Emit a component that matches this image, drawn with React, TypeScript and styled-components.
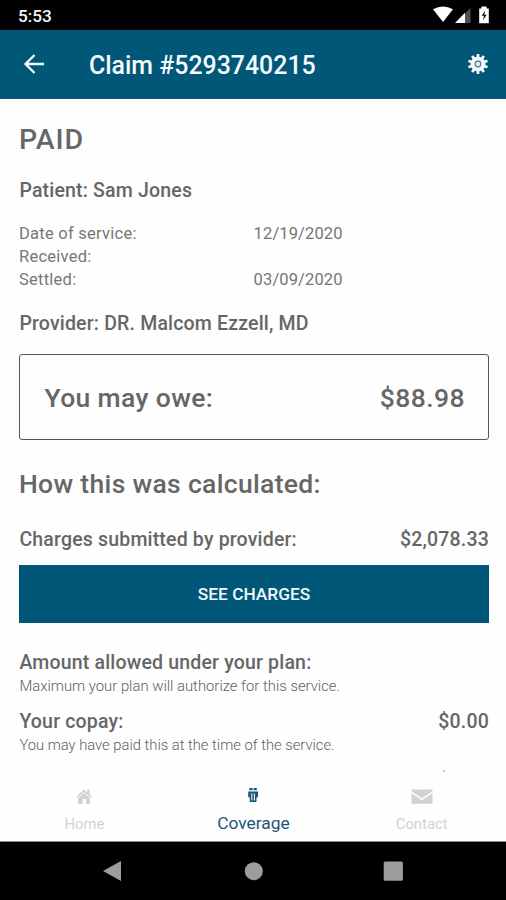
import React from "react";
import styled, { createGlobalStyle } from "styled-components";

const TEAL = "#005778";

const GlobalStyle = createGlobalStyle`
  html, body { margin: 0; padding: 0; background: #fff; }
  *, *::before, *::after { box-sizing: border-box; }
`;

const Screen = styled.div`
  width: 506px;
  height: 900px;
  display: flex;
  flex-direction: column;
  overflow: hidden;
  background: #fefefe;
  color: #666;
  font-family: Roboto, "Liberation Sans", sans-serif;
  white-space: nowrap;
`;

const StatusBar = styled.div`
  height: 30px;
  flex: none;
  display: flex;
  justify-content: space-between;
  padding: 1px 14px 0 18px;
  background: #000;
  color: #f4f4f4;
  font-size: 17.2px;
  font-weight: 500;
  line-height: 31px;
`;

const StatusIcons = styled.svg`
  width: 60px;
  height: 20px;
  margin-top: 4px;
`;

const AppBar = styled.header`
  height: 69px;
  flex: none;
  display: flex;
  align-items: center;
  padding: 0 17.5px 0 23px;
  background: ${TEAL};
  border-bottom: 1px solid #174f6c;
  color: #f7fbfd;
`;

const BackIcon = styled.svg`
  width: 22px;
  height: 22px;
`;

const Title = styled.h1`
  flex: 1;
  margin: 4px 0 0 44px;
  font-size: 24.9px;
  font-weight: 500;
  line-height: 30px;
`;

const GearIcon = styled.svg`
  width: 22px;
  height: 22px;
`;

const Content = styled.main`
  flex: 1;
  display: flex;
  flex-direction: column;
  padding: 24px 17px 0 19px;
`;

const Heading = styled.h2<{ $size: number; $spacing: number }>`
  margin: 0;
  font-size: ${(p) => p.$size}px;
  font-weight: 500;
  line-height: 34px;
  letter-spacing: ${(p) => p.$spacing}px;
`;

const Label = styled.div<{ $top?: number }>`
  display: flex;
  justify-content: space-between;
  margin-top: ${(p) => p.$top ?? 0}px;
  padding-left: 0.4px;
  font-size: 19.5px;
  font-weight: 500;
  line-height: 24px;
  letter-spacing: 0.18px;
`;

const Dates = styled.dl`
  display: grid;
  grid-template-columns: 234.6px auto;
  grid-auto-rows: 23px;
  margin: 19px 0 0;
  font-size: 16.5px;
  line-height: 23px;
  letter-spacing: 0.25px;
  color: #767676;

  dt, dd { margin: 0; }
  dd { letter-spacing: 0.12px; }
`;

const OweBox = styled.section`
  height: 86px;
  display: flex;
  align-items: center;
  justify-content: space-between;
  margin: 18px 0 27px;
  padding: 1px 23px 0 24.5px;
  border: 1.5px solid #555;
  border-radius: 3px;
`;

const ChargesButton = styled.button`
  height: 58px;
  margin: 13px 0 28px;
  padding: 0 0 1px;
  border: 0;
  background: ${TEAL};
  color: #f2f9fc;
  font: 500 17.3px Roboto, sans-serif;
`;

const Note = styled.p<{ $size: number }>`
  margin: 2px 0 0;
  padding-left: 0.4px;
  font-size: ${(p) => p.$size}px;
  font-weight: 300;
  line-height: 18px;
  color: #606060;
`;

const Speck = styled.span`
  width: 2px;
  height: 2px;
  margin: 16px 0 0 424px;
  border-radius: 1px;
  background: #b5b5b5;
`;

const TabBar = styled.nav`
  height: 62px;
  flex: none;
  display: grid;
  grid-template-columns: repeat(3, 1fr);
  border-bottom: 1px solid #888;
`;

const Tab = styled.a<{ $active?: boolean }>`
  display: flex;
  flex-direction: column;
  align-items: center;
  color: ${(p) => (p.$active ? "#1d5677" : "#d2d2d2")};
  font-size: ${(p) => (p.$active ? 17.4 : 14.8)}px;
  line-height: 24px;

  svg { width: 24px; height: 24px; margin: 4px 0; }
`;

const TabText = styled.span<{ $up?: boolean }>`
  margin-top: ${(p) => (p.$up ? -1 : 0)}px;
  padding-left: ${(p) => (p.$up ? 1 : 0)}px;
`;

const SystemNav = styled.div`
  height: 58px;
  flex: none;
  display: flex;
  background: #000;
`;

const NavGlyphs = styled.svg`
  width: 506px;
  height: 58px;
  fill: #9d9d9d;
`;

const gearTeeth = Array.from({ length: 10 }, (_, i) => i * 36);

export default function App() {
  return (
    <>
      <GlobalStyle />
      <Screen>
        <StatusBar>
          <span>5:53</span>
          <StatusIcons viewBox="432 5 60 20">
            <path d="M433 9.2Q443 3.8 453 9.2L443 22Z" fill="#fff" />
            <path d="M456 23L470.5 8V23Z" fill="#505050" />
            <path d="M455 23L465 12.8V23Z" fill="#fff" />
            <path d="M479.2 8.6h2.2V6.5h5.2v2.1h2.2V23.2h-9.6Z" fill="#fff" />
            <path d="M485.2 10.8l-3.6 5h2.3l-.8 4.4 3.6-5.4h-2.4z" fill="#111" />
          </StatusIcons>
        </StatusBar>
        <AppBar>
          <BackIcon viewBox="0 0 22 22" fill="none" stroke="currentColor" strokeWidth="2.3">
            <path d="M21 11H2.5M11.5 2L2.5 11l9 9" />
          </BackIcon>
          <Title>Claim #5293740215</Title>
          <GearIcon viewBox="0 0 22 22" fill="currentColor">
            {gearTeeth.map((angle) => (
              <path key={angle} d="M9.3 5L9.8 1h2.4l.5 4Z" transform={`rotate(${angle} 11 11)`} />
            ))}
            <circle cx="11" cy="11" r="7.3" />
            <circle cx="11" cy="11" r="2.9" fill="#dfe9ee" stroke="#467990" strokeWidth="1.1" />
          </GearIcon>
        </AppBar>

        <Content>
          <Heading $size={28.5} $spacing={0.8}>PAID</Heading>
          <Label $top={22}>Patient: Sam Jones</Label>
          <Dates>
            <dt>Date of service:</dt>
            <dd>12/19/2020</dd>
            <dt>Received:</dt>
            <dd />
            <dt>Settled:</dt>
            <dd>03/09/2020</dd>
          </Dates>
          <Label $top={21}>Provider: DR. Malcom Ezzell, MD</Label>

          <OweBox>
            <Heading $size={26.5} $spacing={0.35}>You may owe:</Heading>
            <Heading $size={26.5} $spacing={0.45}>$88.98</Heading>
          </OweBox>

          <Heading $size={26.5} $spacing={0.32}>How this was calculated:</Heading>
          <Label $top={27}>
            <span>Charges submitted by provider:</span>
            <span>$2,078.33</span>
          </Label>
          <ChargesButton>SEE CHARGES</ChargesButton>

          <Label>Amount allowed under your plan:</Label>
          <Note $size={14.85}>Maximum your plan will authorize for this service.</Note>
          <Label $top={15}>
            <span>Your copay:</span>
            <span>$0.00</span>
          </Label>
          <Note $size={14.75}>You may have paid this at the time of the service.</Note>
          <Speck />
        </Content>

        <TabBar>
          <Tab>
            <svg viewBox="0 0 24 24" fill="currentColor">
              <path d="M4.4 12.6L12 5.6l3.2 2.9V5.6h2.4v5l2.4 2-1 1.2L12 8l-6.6 5.8Z" />
              <path d="M6 14.2l6-5.4 6 5.4V20h-4v-5h-3.4v5H6Z" />
            </svg>
            <TabText>Home</TabText>
          </Tab>
          <Tab $active>
            <svg viewBox="0 0 24 24" fill="currentColor">
              <path d="M8.4 4h3.2v2.2H8.4zM12.6 4h3.2v2.2h-3.2z" />
              <path d="M7.2 7.4h9.8v5.8h-1.5V18H8.7v-4.8H7.2Z" />
              <path d="M10.3 9.4h1.1v7h-1.1zM12.9 9.4h1.1v7h-1.1z" fill="#eef4f7" />
            </svg>
            <TabText $up>Coverage</TabText>
          </Tab>
          <Tab>
            <svg viewBox="0 0 24 24" fill="currentColor">
              <path d="M1.5 5.5h21v1.8L12 14.2 1.5 7.3Z" />
              <path d="M1.5 9.2L12 16.2l10.5-7V19.8h-21Z" />
            </svg>
            <TabText>Contact</TabText>
          </Tab>
        </TabBar>

        <SystemNav>
          <NavGlyphs viewBox="0 842 506 58">
            <path d="M103 871L121 861V881Z" />
            <circle cx="253.8" cy="871.2" r="9" />
            <rect x="383.7" y="861.5" width="19.2" height="19.2" rx="1.5" />
          </NavGlyphs>
        </SystemNav>
      </Screen>
    </>
  );
}
